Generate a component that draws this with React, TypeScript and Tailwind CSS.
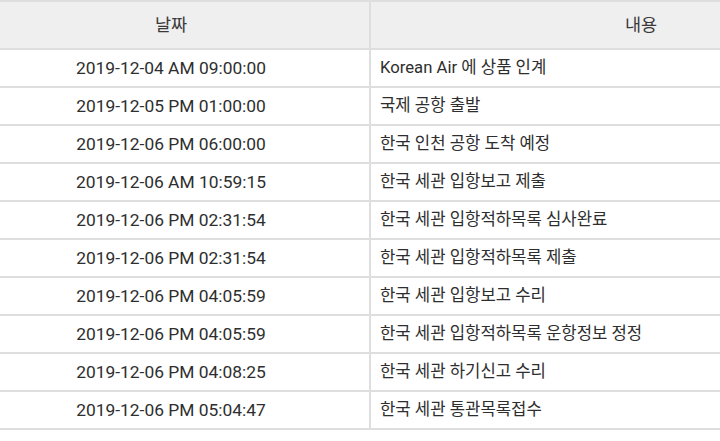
const rows: [string, string][] = [
  ['2019-12-04 AM 09:00:00', 'Korean Air 에 상품 인계'],
  ['2019-12-05 PM 01:00:00', '국제 공항 출발'],
  ['2019-12-06 PM 06:00:00', '한국 인천 공항 도착 예정'],
  ['2019-12-06 AM 10:59:15', '한국 세관 입항보고 제출'],
  ['2019-12-06 PM 02:31:54', '한국 세관 입항적하목록 심사완료'],
  ['2019-12-06 PM 02:31:54', '한국 세관 입항적하목록 제출'],
  ['2019-12-06 PM 04:05:59', '한국 세관 입항보고 수리'],
  ['2019-12-06 PM 04:05:59', '한국 세관 입항적하목록 운항정보 정정'],
  ['2019-12-06 PM 04:08:25', '한국 세관 하기신고 수리'],
  ['2019-12-06 PM 05:04:47', '한국 세관 통관목록접수'],
];

export default function App() {
  return (
    <div className="w-[720px] h-[441px] overflow-hidden bg-white font-['Roboto','Noto_Sans_CJK_KR',sans-serif] text-[#2e2e2e]">
      <table className="ml-[-29px] w-[940px] table-fixed border-collapse">
        <colgroup>
          <col className="w-[398px]" />
          <col className="w-[542px]" />
        </colgroup>
        <thead>
          <tr className="h-[48px] bg-[#efefef]">
            <th className="border-2 border-[#dedede] text-center text-[17.5px] font-normal text-[#3a3a3a]">날짜</th>
            <th className="border-2 border-[#dedede] text-center text-[17.5px] font-normal text-[#3a3a3a]">내용</th>
          </tr>
        </thead>
        <tbody>
          {rows.map(([date, text], i) => (
            <tr key={i} className="h-[38px]">
              <td className="border-2 border-[#dedede] text-center text-[17.4px]">{date}</td>
              <td className="border-2 border-[#dedede] pl-[9px] text-[16.7px]">{text}</td>
            </tr>
          ))}
        </tbody>
      </table>
    </div>
  );
}
